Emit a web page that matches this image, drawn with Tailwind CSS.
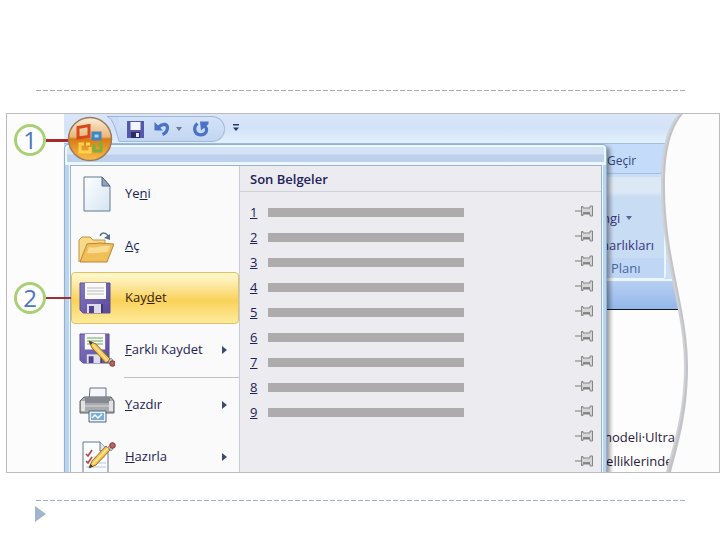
<!DOCTYPE html>
<html lang="tr">
<head>
    <meta charset="UTF-8">
    <meta name="viewport" content="width=device-width, initial-scale=1.0">
    <title>Office Düğmesi</title>
    <script src="https://cdn.jsdelivr.net/npm/@tailwindcss/browser@4"></script>
</head>
<body class="bg-white font-['Open_Sans','Noto_Sans',sans-serif] text-[13px] text-[#1c2258]">
    <!-- shared icons -->
    <svg class="absolute size-0">
        <linearGradient id="paperFill" x1="0" y1="0" x2="1" y2="1"><stop offset="0" stop-color="#fff"/><stop offset="1" stop-color="#d5e4f2"/></linearGradient>
        <linearGradient id="floppyFill" x1="0" y1="0" x2="1" y2="1"><stop offset="0" stop-color="#8579c0"/><stop offset="1" stop-color="#5b489c"/></linearGradient>
        <symbol id="pin" viewBox="0 0 18 12">
            <path d="M0 6h6" stroke="#9a9a9a" stroke-width="1.4"/>
            <path d="M6.500 1.500h1.500v1.500h7V1h2.500v10H15V9H8v1.500H6.500z" fill="#d6d6d8" stroke="#858585"/>
            <path d="M8 8h7" stroke="#777" stroke-width="1.600"/>
        </symbol>
        <symbol id="floppy" viewBox="0 0 32 32">
            <path d="M1 1h30v30H4l-3-3z" fill="url(#floppyFill)" stroke="#5d509c"/>
            <path d="M6 1h21v16H6z" fill="#fafafa"/>
        </symbol>
        <symbol id="shutter" viewBox="0 0 32 32">
            <path d="M8 22h16v9H8z" fill="#dcdcea"/>
            <path d="M10 24h5v7h-5z" fill="#51448c"/>
            <path d="M22 22h2v9h-2z" fill="#41366f"/>
        </symbol>
        <symbol id="pencil" viewBox="0 0 28 28">
            <path d="M1 1l7 3 14 15-4 4L4 8z" fill="#f6c650" stroke="#9b6a1e"/>
            <path d="M5 5l15 16" stroke="#fbe6a0" stroke-width="1.600"/>
            <path d="M1 1l4 1.500L2.500 5z" fill="#3a3a3a"/>
            <path d="M20 22l3-4 2 2-3 4z" fill="#c5c9cf" stroke="#6c7077" stroke-width=".6"/>
            <circle cx="24.500" cy="23.500" r="2.800" fill="#b96259" stroke="#7c3c38"/>
        </symbol>
    </svg>

    <main class="pt-[90px]">
        <div class="ml-9 mr-[34px] h-px bg-[repeating-linear-gradient(90deg,#a9acb2_0_5px,transparent_5px_7px)]"></div>

        <figure class="relative mt-[22px] ml-[6px] flex max-h-[360px] overflow-hidden border border-[#bcbcc0] bg-[#fcfcfc] pl-[57px]">
            <!-- application window, menu stacked over the ribbon -->
            <div class="grid flex-1">
                <div class="col-start-1 row-start-1 flex flex-col">
                    <header class="flex h-[29px] items-start bg-linear-to-b from-[#dbe5f8] via-[#d2e3f8] to-[#e3f1fc] pt-[2px]">
                        <svg class="ml-[43px] h-[26px] w-3" viewBox="0 0 12 26"><path d="M0 .5C6 2 9 14 12 25.500V.5z" fill="#cbdcf4"/><path d="M0 .5h12M0 .5C6 2 9 14 12 25.500" fill="none" stroke="#9fb4d8"/></svg>
                        <div class="flex h-[26px] items-center rounded-r-full border-y border-r border-[#a3b8dc] bg-linear-to-b from-[#d3e2f7] to-[#c3d6f1] pr-[15px] pl-2">
                            <button aria-label="Kaydet" class="mr-[10px]">
                                <svg class="size-[17px]" viewBox="0 0 17 17"><path d="M0 0h17v17H0z" fill="#5658ae"/><path d="M3.500 1h10v8h-10z" fill="#f4f6ff"/><path d="M4 11h9v6H4z" fill="#2c2c66"/><path d="M9 12h3v4H9z" fill="#e8eaff"/></svg>
                            </button>
                            <button aria-label="Geri Al" class="mr-[6px]">
                                <svg class="size-4" viewBox="0 0 16 16"><path d="M4 6.500c4-4 9-4.500 9.500 0 0 3-1.500 5.500-5 7" fill="none" stroke="#4a72c6" stroke-width="3.200"/><path d="M.5 1v8.500H9z" fill="#4a72c6"/></svg>
                            </button>
                            <button aria-label="Geri Al seçenekleri" class="mr-[11px]">
                                <svg class="h-1 w-[6px]" viewBox="0 0 6 4"><path d="M0 0h6L3 4z" fill="#6b7896"/></svg>
                            </button>
                            <button aria-label="Yinele">
                                <svg class="size-4" viewBox="0 0 16 16"><path d="M4.500 2.500C0 6 1 13.500 7.500 13.800c6 0 7.500-5 4.500-8.500" fill="none" stroke="#4a72c6" stroke-width="3.200"/><path d="M7 .5h8.500V3L8 9.500z" fill="#4a72c6"/></svg>
                            </button>
                        </div>
                        <button aria-label="Özelleştir" class="mt-2 ml-2">
                            <svg class="h-[7px] w-[6px]" viewBox="0 0 6 7"><path d="M0 0h6v1.500H0zM0 3.500h6L3 7z" fill="#1f3a6e"/></svg>
                        </button>
                    </header>
                    <div class="flex h-[31px] items-center border-y border-[#9dbfe8] bg-[#c4dbfa] pt-1 pl-[543px] text-xs text-[#33477a]">Geçir</div>
                    <div class="flex h-[107px] border-b-2 border-[#eaf6fc] bg-[#cadef6] pt-[3px] pl-[538px]">
                        <div class="flex w-16 flex-col rounded-br border-r-2 border-b border-[#eaf6fc] bg-linear-to-b from-[#dde8f6] from-15% to-[#c8dcf4] to-20%">
                            <div class="flex h-[82px] flex-col items-start gap-[9px] overflow-hidden pt-8 text-[#3a3480]">
                                <span class="flex items-center gap-[6px] leading-[18px]">ngi <svg class="h-1 w-[6px]" viewBox="0 0 6 4"><path d="M0 0h6L3 4z" fill="#4f6a94"/></svg></span>
                                <span class="-ml-px leading-[18px]">narlıkları</span>
                            </div>
                            <div class="flex-1 bg-[#bfd7f4] pl-[9px] leading-[20px] text-[#4c65a5]">Planı</div>
                        </div>
                    </div>
                    <div class="h-[29px] border-b border-[#15151f] bg-linear-to-b from-[#b7d0f2] to-[#94b7ea]"></div>
                    <div class="flex-1 bg-[#fdfdfd] pt-[115px] pl-[536px] leading-6 text-[#2a1a3e]">
                        <p class="whitespace-nowrap">modeli·Ultra</p>
                        <p class="whitespace-nowrap">zelliklerinde</p>
                    </div>
                </div>

                <!-- office menu -->
                <nav class="z-10 col-start-1 row-start-1 mt-[30px] w-[543px] justify-self-start rounded-t border border-[#8fb1cf] bg-[#b9d4ec] shadow-[3px_3px_4px_#00000066]">
                    <div class="h-[20px] rounded-t border-2 border-b-[3px] border-[#eef7fd] bg-linear-to-b from-[#d6e3f5] from-45% to-[#bdd0ec] to-55%"></div>
                    <div class="mr-1 ml-[5px] flex border border-[#97b6cc] outline outline-[#eef7fd]">
                        <ul class="w-[169px] border-r border-[#c9cdd6] bg-[#fafafb] pt-[2px]">
                            <li><button class="flex h-[52px] w-full items-center pl-[9px] text-left">
                                <svg class="mr-[11px] h-9 w-[34px]" viewBox="0 0 34 36"><path d="M4 1h18l8 9v25H4z" fill="url(#paperFill)" stroke="#64788f"/><path d="M22 1v9h8z" fill="#8fa5bc" stroke="#52677f"/></svg>
                                <span>Ye<u>n</u>i</span>
                            </button></li>
                            <li><button class="flex h-[52px] w-full items-center pl-[7px] text-left">
                                <svg class="mr-[11px] h-9 w-9" viewBox="0 0 36 36"><path d="M1 34V12l3-3h8l3 3h12v6" fill="#f7d988" stroke="#c39642"/><path d="M2 34l7-18c4-1 8 0 12-1l15 1-7 18z" fill="#f1bf58" stroke="#b9853a"/><path d="M11 19c7 2 13-2 21-1l-2 6c-8 0-14 2-21 1z" fill="#fae3a4" opacity=".8"/><path d="M22 8c2-4 6-4 9 1" fill="none" stroke="#56728e" stroke-width="1.500"/><path d="M32 6v6l-6-2z" fill="#56728e"/></svg>
                                <span><u>A</u>ç</span>
                            </button></li>
                            <li><button class="flex h-[52px] w-full items-center rounded-sm border border-[#e3bf63] bg-linear-to-b from-[#fff6c8] from-5% via-[#fad257] via-55% to-[#fdeb9c] pl-[7px] text-left text-[#33220f]">
                                <svg class="mr-[14px] size-8" viewBox="0 0 32 32"><use href="#floppy"/><use href="#shutter"/><path d="M8 6h17M8 9h17M8 12h17" stroke="#b9b9bd"/></svg>
                                <span>Kay<u>d</u>et</span>
                            </button></li>
                            <li><button class="flex h-[52px] w-full items-center pr-3 pl-2 text-left">
                                <svg class="mr-[10px] h-9 w-9" viewBox="0 0 36 36"><use href="#floppy" x="0" y="1" width="31" height="31"/><use href="#shutter" x="0" y="1" width="31" height="31"/><path d="M8 6h16M8 9h16M8 12h16" stroke="#69a857"/><use href="#pencil" x="9" y="8" width="28" height="28"/></svg>
                                <span><u>F</u>arklı Kaydet</span>
                                <svg class="ml-auto h-2 w-[5px]" viewBox="0 0 5 8"><path d="M0 0l5 4-5 4z" fill="#3c4a70"/></svg>
                            </button></li>
                            <li class="my-px ml-[53px] h-px bg-[#bfc1c8]"></li>
                            <li><button class="flex h-[52px] w-full items-center pr-3 pl-2 text-left">
                                <svg class="mr-[10px] h-9 w-9" viewBox="0 0 36 36"><path d="M10 14l1-13h16v13z" fill="#f3f7fb" stroke="#68737f"/><path d="M1 14l4-4h27l3 4v12H1z" fill="#a9abaf" stroke="#5d6064"/><path d="M6 10h25v6H6z" fill="#868a90"/><path d="M2 14h4v10H2zM30 14h4v10h-4z" fill="#e3e3e5"/><path d="M6 19h24" stroke="#d8dadd"/><path d="M10 24h17v11H10z" fill="#e9f3fb" stroke="#4f6476"/><path d="M12 26h13v7H12z" fill="#79acd9"/><path d="M13 31l3-3 3 3 4-4" fill="none" stroke="#fff" stroke-width="1.500"/></svg>
                                <span><u>Y</u>azdır</span>
                                <svg class="ml-auto h-2 w-[5px]" viewBox="0 0 5 8"><path d="M0 0l5 4-5 4z" fill="#3c4a70"/></svg>
                            </button></li>
                            <li><button class="flex h-[52px] w-full items-center pr-3 pl-[9px] text-left">
                                <svg class="mr-[9px] h-9 w-9" viewBox="0 0 36 36"><path d="M3 3h17l8 9v24H3z" fill="#fafcfe" stroke="#64788f"/><path d="M20 3v9h8" fill="#dbe5ef" stroke="#64788f"/><path d="M6 15l2 2 4-6M6 22l2 2 4-6" fill="none" stroke="#b04446" stroke-width="1.600"/><path d="M14 18h11M14 24h12M6 28h20" stroke="#b3cbe0"/><use href="#pencil" width="28" height="28" transform="matrix(1 0 0 -1 8 30)"/></svg>
                                <span><u>H</u>azırla</span>
                                <svg class="ml-auto h-2 w-[5px]" viewBox="0 0 5 8"><path d="M0 0l5 4-5 4z" fill="#3c4a70"/></svg>
                            </button></li>
                        </ul>
                        <section class="flex-1 bg-[#ebebf0]">
                            <h2 class="h-[26px] border-b border-[#cfd1da] pl-[10px] leading-[26px] font-semibold">Son Belgeler</h2>
                            <ol class="pt-2 pr-2 pl-[10px]">
                                <li class="flex h-[25px] items-center"><u class="w-[18px]">1</u><span class="h-[9px] w-[196px] bg-[#adabab]"></span><svg class="mb-1 ml-auto h-3 w-[18px]"><use href="#pin"/></svg></li>
                                <li class="flex h-[25px] items-center"><u class="w-[18px]">2</u><span class="h-[9px] w-[196px] bg-[#adabab]"></span><svg class="mb-1 ml-auto h-3 w-[18px]"><use href="#pin"/></svg></li>
                                <li class="flex h-[25px] items-center"><u class="w-[18px]">3</u><span class="h-[9px] w-[196px] bg-[#adabab]"></span><svg class="mb-1 ml-auto h-3 w-[18px]"><use href="#pin"/></svg></li>
                                <li class="flex h-[25px] items-center"><u class="w-[18px]">4</u><span class="h-[9px] w-[196px] bg-[#adabab]"></span><svg class="mb-1 ml-auto h-3 w-[18px]"><use href="#pin"/></svg></li>
                                <li class="flex h-[25px] items-center"><u class="w-[18px]">5</u><span class="h-[9px] w-[196px] bg-[#adabab]"></span><svg class="mb-1 ml-auto h-3 w-[18px]"><use href="#pin"/></svg></li>
                                <li class="flex h-[25px] items-center"><u class="w-[18px]">6</u><span class="h-[9px] w-[196px] bg-[#adabab]"></span><svg class="mb-1 ml-auto h-3 w-[18px]"><use href="#pin"/></svg></li>
                                <li class="flex h-[25px] items-center"><u class="w-[18px]">7</u><span class="h-[9px] w-[196px] bg-[#adabab]"></span><svg class="mb-1 ml-auto h-3 w-[18px]"><use href="#pin"/></svg></li>
                                <li class="flex h-[25px] items-center"><u class="w-[18px]">8</u><span class="h-[9px] w-[196px] bg-[#adabab]"></span><svg class="mb-1 ml-auto h-3 w-[18px]"><use href="#pin"/></svg></li>
                                <li class="flex h-[25px] items-center"><u class="w-[18px]">9</u><span class="h-[9px] w-[196px] bg-[#adabab]"></span><svg class="mb-1 ml-auto h-3 w-[18px]"><use href="#pin"/></svg></li>
                                <li class="flex h-[25px] items-center"><svg class="mb-1 ml-auto h-3 w-[18px]"><use href="#pin"/></svg></li>
                                <li class="flex h-[25px] items-center"><svg class="mb-1 ml-auto h-3 w-[18px]"><use href="#pin"/></svg></li>
                            </ol>
                        </section>
                    </div>
                </nav>
            </div>

            <!-- torn paper edge -->
            <svg class="absolute top-0 right-0 z-10 h-[358px] w-16" viewBox="0 0 64 358">
                <path d="M24 0C10 14 6 40 6 72C6 145 29 195 29 252C29 295 20 325 11 358H64V0z" fill="#cfd1d5"/>
                <path d="M26 0C12 15 8 41 8 72C8 145 31 195 31 252C31 295 22 325 13 358H64V0z" fill="#c2c3c7"/>
                <path d="M28 0C14 16 10 42 10 72C10 145 33 195 33 252C33 295 25 325 16 358H64V0z" fill="#fcfcfc"/>
            </svg>

            <!-- office button -->
            <button aria-label="Office Düğmesi" class="absolute top-[2px] left-[60px] z-20">
                <svg class="size-[46px]" viewBox="0 0 46 46">
                    <defs>
                        <linearGradient id="orb" x1="0" y1="0" x2="0" y2="1"><stop offset="0" stop-color="#fbeedb"/><stop offset=".45" stop-color="#e9b678"/><stop offset=".5" stop-color="#d97b16"/><stop offset="1" stop-color="#fbbd4a"/></linearGradient>
                    </defs>
                    <circle cx="23" cy="23" r="21.500" fill="url(#orb)" stroke="#9c7a57" stroke-width="1.500"/>
                    <g fill="none" stroke-width="3">
                        <path d="M11 11.500l11-2v11l-11 1.500z" stroke="#d8481c"/>
                        <path d="M26 17h7v6h-7z" fill="#a4d0ee" stroke="#3f86c0"/>
                        <path d="M17 28h-4v8h10v-5M19 28h4" stroke="#ffd34a"/>
                        <path d="M27 28v7h7v-7h-3" stroke="#7fae3a"/>
                    </g>
                </svg>
            </button>

            <!-- callouts -->
            <div class="absolute top-[10px] left-[7px] z-10 flex items-center">
                <span class="flex size-8 items-center justify-center rounded-full border-[3px] border-[#aad077] bg-white text-2xl leading-none text-[#4677be]">1</span>
                <span class="h-[3px] w-[23px] bg-[#a8282e]"></span>
            </div>
            <div class="absolute top-[168px] left-[7px] z-10 flex items-center">
                <span class="flex size-8 items-center justify-center rounded-full border-[3px] border-[#aad077] bg-white text-2xl leading-none text-[#4677be]">2</span>
                <span class="h-[2px] w-[25px] bg-[#9c3036]"></span>
            </div>
        </figure>

        <div class="mt-[27px] mr-[34px] ml-9 h-px bg-[repeating-linear-gradient(90deg,#9fb0c4_0_5px,transparent_5px_7px)]"></div>
        <svg class="mt-[5px] ml-[35px] h-4 w-[11px]" viewBox="0 0 11 16"><path d="M0 0l11 8-11 8z" fill="#9fb5cd"/></svg>
    </main>
</body>
</html>
